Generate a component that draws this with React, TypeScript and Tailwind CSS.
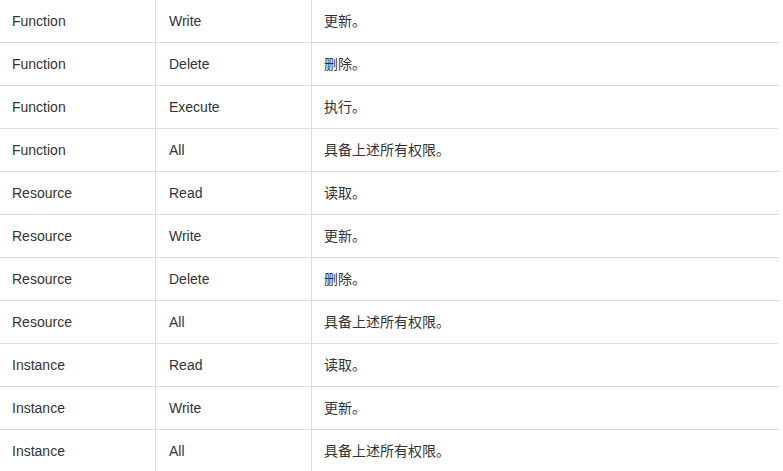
import React from 'react';

const rows: [string, string, string][] = [
  ['Function', 'Write', '更新。'],
  ['Function', 'Delete', '删除。'],
  ['Function', 'Execute', '执行。'],
  ['Function', 'All', '具备上述所有权限。'],
  ['Resource', 'Read', '读取。'],
  ['Resource', 'Write', '更新。'],
  ['Resource', 'Delete', '删除。'],
  ['Resource', 'All', '具备上述所有权限。'],
  ['Instance', 'Read', '读取。'],
  ['Instance', 'Write', '更新。'],
  ['Instance', 'All', '具备上述所有权限。'],
];

const App: React.FC = () => {
  return (
    <div className="w-[783px] h-[471px] overflow-hidden bg-white text-[14px] text-[#333] font-['Liberation_Sans','Noto_Sans_CJK_SC',sans-serif]">
      <div className="w-[779px]">
        {rows.map(([type, perm, desc], i) => (
          <div key={i} className="flex h-[43px] border-b border-[#dddddd]">
            <div className="w-[156px] border-r border-[#dddddd] pl-3 flex items-center">{type}</div>
            <div className="w-[156px] border-r border-[#dddddd] pl-[13px] flex items-center">{perm}</div>
            <div className="flex-1 pl-3 flex items-center">{desc}</div>
          </div>
        ))}
      </div>
    </div>
  );
};

export default App;
